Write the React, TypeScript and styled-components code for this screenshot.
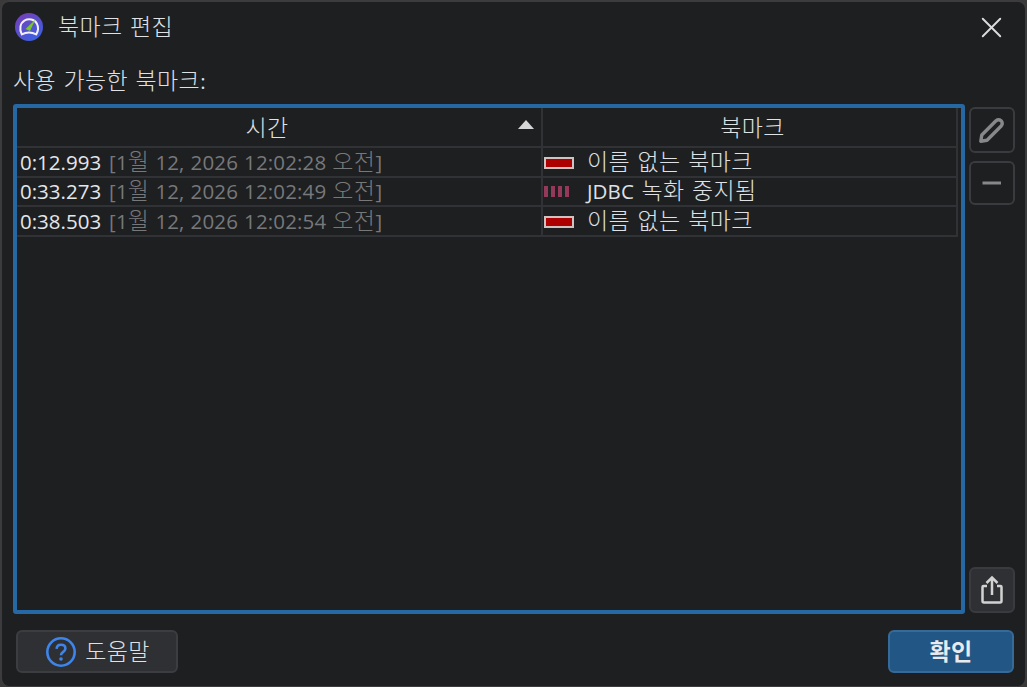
import { Fragment } from "react";
import styled, { createGlobalStyle } from "styled-components";
import { X } from "lucide-react";

const GlobalStyle = createGlobalStyle`
  html, body {
    margin: 0;
    padding: 0;
    background: #3a3a3a;
    overflow: hidden;
  }
  * {
    box-sizing: border-box;
  }
`;

const BASE_FONT = `"Open Sans", "Noto Sans CJK KR", sans-serif`;

const StyledWindow = styled.div`
  display: flex;
  flex-direction: column;
  width: 1027px;
  height: 687px;
  padding: 0 10px 0 11px;
  background: #1e1f21;
  border: 2px solid #3c3c3e;
  border-bottom-width: 1px;
  border-radius: 9px;
  color: #dfe1e5;
  font-family: ${BASE_FONT};
  font-size: 20px;
  word-spacing: 2px;
`;

const StyledTitleBar = styled.header`
  display: flex;
  align-items: center;
  height: 50px;
  flex-shrink: 0;
  padding-left: 1px;
`;

const StyledHangul = styled.span`
  font-size: 23px;
  font-weight: 300;
  letter-spacing: 0.4px;
  line-height: 1;
`;

const StyledTitle = styled.span`
  margin-left: 14px;
  font-size: 20.5px;
`;

const StyledClose = styled.button`
  display: flex;
  margin-left: auto;
  margin-right: 6px;
  padding: 0;
  border: none;
  background: none;
  color: #dcdcdc;
`;

const StyledLabel = styled.div`
  height: 52px;
  padding-top: 15px;
  line-height: 28px;
  font-size: 20.5px;
`;

const StyledContent = styled.div`
  display: flex;
  flex: 1;
  min-height: 0;
  gap: 4px;
`;

const StyledTableFrame = styled.div`
  flex: 1;
  min-width: 0;
  border: 4px solid #2668a3;
  border-radius: 3px;
`;

const StyledGrid = styled.div`
  display: grid;
  grid-template-columns: 526px 415px;
  width: 941px;
`;

const StyledHeaderCell = styled.div<{ $paddingLeft?: number; $paddingRight?: number }>`
  position: relative;
  display: flex;
  align-items: center;
  justify-content: center;
  height: 40px;
  padding-left: ${(props) => props.$paddingLeft ?? 0}px;
  padding-right: ${(props) => props.$paddingRight ?? 0}px;
  border-bottom: 2px solid #303236;
  border-right: 2px solid #303236;
  font-size: 20.5px;
`;

const StyledSortArrow = styled.span`
  position: absolute;
  top: 12px;
  right: 7px;
  width: 0;
  height: 0;
  border-left: 8px solid transparent;
  border-right: 8px solid transparent;
  border-bottom: 9px solid #d6d6d6;
`;

const StyledCell = styled.div<{ $paddingLeft: number }>`
  display: flex;
  align-items: center;
  height: 29.5px;
  padding-left: ${(props) => props.$paddingLeft}px;
  border-bottom: 2px solid #303236;
  border-right: 2px solid #303236;
  line-height: 26px;
  white-space: nowrap;
  font-size: 20.5px;
`;

const StyledTime = styled.span`
  color: #e4e6ea;
`;

const StyledDate = styled.span`
  margin-left: 8px;
  color: #77787a;
  letter-spacing: 0.15px;
  word-spacing: 0.5px;
`;

const StyledMarkerName = styled.span<{ $gap: number }>`
  margin-left: ${(props) => props.$gap}px;
  letter-spacing: 0.1px;
`;

const StyledSolidMarker = styled.span`
  flex-shrink: 0;
  width: 30px;
  height: 12px;
  margin-top: 2px;
  background: #ad0000;
  border: 2px solid #d0c2c0;
`;

const StyledStripedMarker = styled.span`
  display: flex;
  flex-shrink: 0;
  gap: 3px;
  width: 26px;
  height: 11px;
`;

const StyledStripe = styled.span`
  width: 4px;
  background: #95395a;
`;

const StyledSideColumn = styled.div`
  display: flex;
  flex-direction: column;
  gap: 8px;
  width: 46px;
  flex-shrink: 0;
  padding: 3px 0 1px;
`;

const StyledSideButton = styled.button<{
  $filled?: boolean;
  $push?: boolean;
  $height: number;
}>`
  display: flex;
  align-items: center;
  justify-content: center;
  width: 46px;
  height: ${(props) => props.$height}px;
  margin-top: ${(props) => (props.$push ? "auto" : "0")};
  padding: 0;
  background: ${(props) => (props.$filled ? "#2f3033" : "transparent")};
  border: 2px solid #3a3b3e;
  border-radius: 6px;
`;

const StyledFooter = styled.footer`
  display: flex;
  align-items: center;
  justify-content: space-between;
  height: 72px;
  flex-shrink: 0;
  padding: 4px 1px 1px 3px;
`;

const StyledHelpButton = styled.button`
  display: flex;
  align-items: center;
  justify-content: center;
  gap: 9px;
  width: 162px;
  height: 43px;
  padding: 0 0 0 2px;
  background: #2f3033;
  border: 2px solid #3c3d40;
  border-radius: 6px;
  color: #dfe1e5;
  font-family: ${BASE_FONT};
  font-size: 20.5px;
`;

const StyledOkButton = styled.button`
  width: 126px;
  height: 43px;
  padding: 0;
  background: #215685;
  border: 2px solid #356a99;
  border-radius: 6px;
  color: #e8eaee;
  font-family: ${BASE_FONT};
  font-size: 20.5px;

  ${StyledHangul} {
    font-weight: 700;
  }
`;

// hangul runs in the original are a size larger than the latin ones
const Ko: React.FC<{ text: string }> = ({ text }) => (
  <>
    {text.split(/([가-힣]+)/).map((part, i) =>
      i % 2 === 1 ? <StyledHangul key={i}>{part}</StyledHangul> : part
    )}
  </>
);

const AppLogo = () => (
  <svg width="30" height="30" viewBox="0 0 30 30" fill="none">
    <defs>
      <linearGradient id="logoBg" x1="0" y1="0" x2="0.6" y2="1">
        <stop offset="0" stopColor="#7b3bb5" />
        <stop offset="1" stopColor="#3f5fe0" />
      </linearGradient>
    </defs>
    <circle cx="15" cy="15" r="14" fill="url(#logoBg)" />
    <path
      d="M7.8 22.4 C5 17 6.2 11 10.4 8.6 C14.6 6.4 20.4 7 22.8 11.4 C24.6 15 24.2 19.2 22.2 22.4 C17.8 20 12.2 20 7.8 22.4 Z"
      stroke="#f2f0fa"
      strokeWidth="2"
      strokeLinejoin="round"
    />
    <path d="M11.6 17 L21.4 7.6 L16 19 Z" fill="#7cc52a" />
  </svg>
);

const PencilIcon = () => (
  <svg width="26" height="26" viewBox="0 0 26 26" fill="none">
    <path
      d="M1.8 24.2 L2.8 18 L17 3.8 Q19.5 1.8 22.2 3.8 Q24.2 6.5 22.2 9 L8 23.2 Z"
      stroke="#87888a"
      strokeWidth="3.4"
      strokeLinejoin="round"
    />
  </svg>
);

const MinusIcon = () => (
  <svg width="20" height="20" viewBox="0 0 20 20">
    <rect x="0.5" y="8.5" width="18.5" height="3" fill="#87888a" />
  </svg>
);

const ShareIcon = () => (
  <svg width="24" height="30" viewBox="0 0 24 30" fill="none" stroke="#d2d2d2" strokeWidth="2.5">
    <path d="M7 11 H3.5 Q2.5 11 2.5 12 V26 Q2.5 27.5 4 27.5 H20 Q21.5 27.5 21.5 26 V12 Q21.5 11 20.5 11 H17" />
    <path d="M12 20 V3 M6.5 8 L12 2.5 L17.5 8" />
  </svg>
);

const HelpIcon = () => (
  <svg width="30" height="30" viewBox="0 0 30 30" fill="none">
    <circle cx="15" cy="15" r="13.7" stroke="#3d85ea" strokeWidth="2.6" />
    <path
      d="M10.6 11.8 C10.8 9 12.6 7.8 15 7.8 C17.6 7.8 19.4 9.3 19.4 11.5 C19.4 13.4 18.2 14.2 16.9 15.1 C15.6 16 15 16.6 15 18.2"
      stroke="#3d85ea"
      strokeWidth="2.6"
    />
    <circle cx="15" cy="22" r="1.8" fill="#3d85ea" />
  </svg>
);

const StripedMarker = () => (
  <StyledStripedMarker>
    <StyledStripe />
    <StyledStripe />
    <StyledStripe />
    <StyledStripe />
  </StyledStripedMarker>
);

const BOOKMARKS = [
  {
    time: "0:12.993",
    date: "[1월 12, 2026 12:02:28 오전]",
    name: "이름 없는 북마크",
    striped: false,
  },
  {
    time: "0:33.273",
    date: "[1월 12, 2026 12:02:49 오전]",
    name: "JDBC 녹화 중지됨",
    striped: true,
  },
  {
    time: "0:38.503",
    date: "[1월 12, 2026 12:02:54 오전]",
    name: "이름 없는 북마크",
    striped: false,
  },
];

const App = () => {
  return (
    <StyledWindow>
      <GlobalStyle />
      <StyledTitleBar>
        <AppLogo />
        <StyledTitle>
          <Ko text="북마크 편집" />
        </StyledTitle>
        <StyledClose>
          <X size={35} strokeWidth={1.3} />
        </StyledClose>
      </StyledTitleBar>
      <StyledLabel>
        <Ko text="사용 가능한 북마크:" />
      </StyledLabel>
      <StyledContent>
        <StyledTableFrame>
          <StyledGrid>
            <StyledHeaderCell $paddingRight={24}>
              <Ko text="시간" />
              <StyledSortArrow />
            </StyledHeaderCell>
            <StyledHeaderCell $paddingLeft={6}>
              <Ko text="북마크" />
            </StyledHeaderCell>
            {BOOKMARKS.map((bookmark) => (
              <Fragment key={bookmark.time}>
                <StyledCell $paddingLeft={3}>
                  <StyledTime>{bookmark.time}</StyledTime>
                  <StyledDate>
                    <Ko text={bookmark.date} />
                  </StyledDate>
                </StyledCell>
                <StyledCell $paddingLeft={1}>
                  {bookmark.striped ? <StripedMarker /> : <StyledSolidMarker />}
                  <StyledMarkerName $gap={bookmark.striped ? 17 : 13}>
                    <Ko text={bookmark.name} />
                  </StyledMarkerName>
                </StyledCell>
              </Fragment>
            ))}
          </StyledGrid>
        </StyledTableFrame>
        <StyledSideColumn>
          <StyledSideButton $height={46}>
            <PencilIcon />
          </StyledSideButton>
          <StyledSideButton $height={44}>
            <MinusIcon />
          </StyledSideButton>
          <StyledSideButton $height={46} $filled $push>
            <ShareIcon />
          </StyledSideButton>
        </StyledSideColumn>
      </StyledContent>
      <StyledFooter>
        <StyledHelpButton>
          <HelpIcon />
          <Ko text="도움말" />
        </StyledHelpButton>
        <StyledOkButton>
          <Ko text="확인" />
        </StyledOkButton>
      </StyledFooter>
    </StyledWindow>
  );
};

export default App;
